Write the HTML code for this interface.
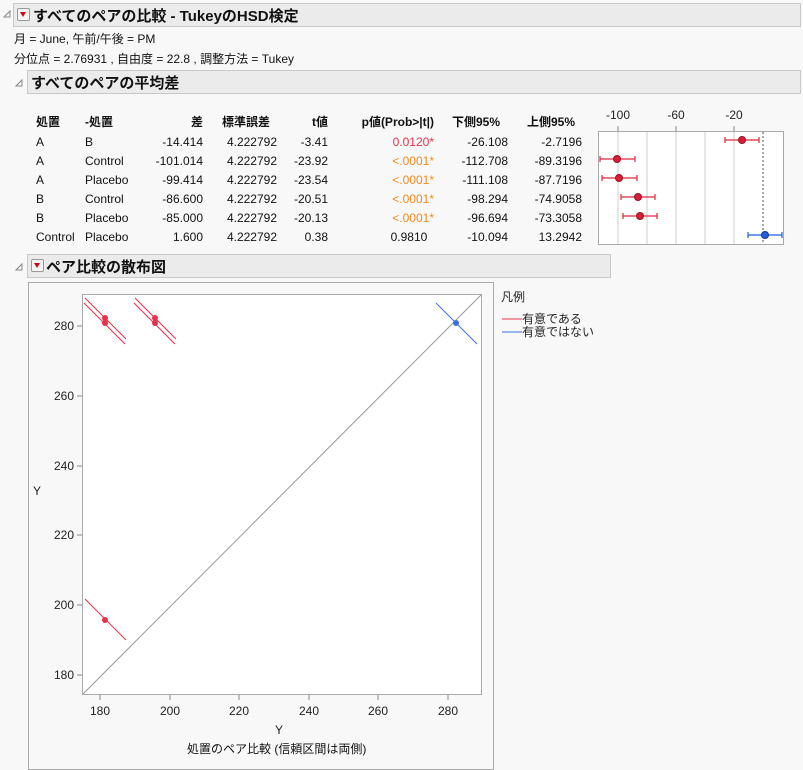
<!DOCTYPE html>
<html><head><meta charset="utf-8"><style>
body{margin:0;width:803px;height:770px;background:#f8f8f8;font-family:"Liberation Sans","Noto Sans CJK JP",sans-serif;font-size:12px;color:#111;position:relative;overflow:hidden}
.a{position:absolute;white-space:nowrap}
.hdr{position:absolute;background:#ebebeb;border:1px solid #c8c8c8;font-weight:bold;font-size:15px}
.dd{position:absolute;width:11px;height:11px;border:1px solid #999;background:#f4f4f4;border-radius:2px}
.dd:after{content:"";position:absolute;left:2px;top:3px;border-left:3.5px solid transparent;border-right:3.5px solid transparent;border-top:5px solid #d0021b}
.r{text-align:right}
.b{font-weight:bold}
</style></head><body>
<svg class="a" style="left:0;top:0" width="803" height="770">
<path d="M4 17 L10 11 L10 17 Z" fill="none" stroke="#888"/>
<path d="M16 86 L22 80 L22 86 Z" fill="none" stroke="#888"/>
<path d="M16 270 L22 264 L22 270 Z" fill="none" stroke="#888"/>
</svg>
<div class="hdr" style="left:13px;top:3px;width:786px;height:22px"></div>
<div class="dd" style="left:17px;top:8px"></div>
<div class="a b" style="left:33px;top:5px;font-size:15px">すべてのペアの比較 - TukeyのHSD検定</div>
<div class="a" style="left:14px;top:30px">月 = June, 午前/午後 = PM</div>
<div class="a" style="left:14px;top:50px">分位点 = 2.76931 , 自由度 = 22.8 , 調整方法 = Tukey</div>
<div class="hdr" style="left:27px;top:70px;width:772px;height:22px"></div>
<div class="a b" style="left:31px;top:72px;font-size:15px">すべてのペアの平均差</div>

<div class="a b" style="left:36px;top:113px">処置</div>
<div class="a b" style="left:85px;top:113px">-処置</div>
<div class="a b r" style="left:150px;width:53px;top:113px">差</div>
<div class="a b r" style="left:210px;width:60px;top:113px">標準誤差</div>
<div class="a b r" style="left:280px;width:48px;top:113px">t値</div>
<div class="a b r" style="left:330px;width:104px;top:113px">p値(Prob&gt;|t|)</div>
<div class="a b r" style="left:440px;width:60px;top:113px">下側95%</div>
<div class="a b r" style="left:510px;width:65px;top:113px">上側95%</div>

<div class="a" style="left:36px;top:133px;line-height:19px">A<br>A<br>A<br>B<br>B<br>Control</div>
<div class="a" style="left:85px;top:133px;line-height:19px">B<br>Control<br>Placebo<br>Control<br>Placebo<br>Placebo</div>
<div class="a r" style="left:140px;width:63px;top:133px;line-height:19px">-14.414<br>-101.014<br>-99.414<br>-86.600<br>-85.000<br>1.600</div>
<div class="a r" style="left:210px;width:67px;top:133px;line-height:19px">4.222792<br>4.222792<br>4.222792<br>4.222792<br>4.222792<br>4.222792</div>
<div class="a r" style="left:280px;width:48px;top:133px;line-height:19px">-3.41<br>-23.92<br>-23.54<br>-20.51<br>-20.13<br>0.38</div>
<div class="a r" style="left:360px;width:74px;top:133px;line-height:19px"><span style="color:#e8324a">0.0120*</span><br><span style="color:#f08a1e">&lt;.0001*</span><br><span style="color:#f08a1e">&lt;.0001*</span><br><span style="color:#f08a1e">&lt;.0001*</span><br><span style="color:#f08a1e">&lt;.0001*</span><br>0.9810&nbsp;&nbsp;</div>
<div class="a r" style="left:440px;width:68px;top:133px;line-height:19px">-26.108<br>-112.708<br>-111.108<br>-98.294<br>-96.694<br>-10.094</div>
<div class="a r" style="left:510px;width:72px;top:133px;line-height:19px">-2.7196<br>-89.3196<br>-87.7196<br>-74.9058<br>-73.3058<br>13.2942</div>

<svg class="a" style="left:590px;top:100px" width="213" height="150">
<rect x="8.5" y="31.5" width="185" height="113" fill="#fff" stroke="#aaa"/>
<g stroke="#ccc"><path d="M28 32V144M57 32V144M86 32V144M115 32V144M144 32V144"/></g>
<g stroke="#888"><path d="M28 26V31M86 26V31M144 26V31"/></g>
<path d="M173 32V144" stroke="#555" stroke-dasharray="2,2"/>
<g font-size="12" fill="#222" text-anchor="middle"><text x="28" y="19">-100</text><text x="86" y="19">-60</text><text x="144" y="19">-20</text></g>
<g stroke="#e0283c" stroke-width="1.2">
<path d="M135 40H169M135 37V43M169 37V43"/>
<path d="M10 59H45M10 56V62M45 56V62"/>
<path d="M12 78H47M12 75V81M47 75V81"/>
<path d="M31 97H65M31 94V100M65 94V100"/>
<path d="M33 116H67M33 113V119M67 113V119"/>
</g>
<g fill="#d61f35" stroke="#a01020"><circle cx="152" cy="40" r="3.5"/><circle cx="27" cy="59" r="3.5"/><circle cx="29" cy="78" r="3.5"/><circle cx="48" cy="97" r="3.5"/><circle cx="50" cy="116" r="3.5"/></g>
<path d="M158 135H192M158 132V138M192 132V138" stroke="#1f5fe0" stroke-width="1.2"/>
<circle cx="175" cy="135" r="3.5" fill="#1f5fe0" stroke="#103a90"/>
</svg>

<div class="hdr" style="left:27px;top:254px;width:582px;height:22px"></div>
<div class="dd" style="left:31px;top:259px"></div>
<div class="a b" style="left:46px;top:256px;font-size:15px">ペア比較の散布図</div>

<svg class="a" style="left:0;top:0" width="803" height="770">
<rect x="28.5" y="282.5" width="465" height="487" fill="#f8f8f8" stroke="#aaa"/>
<rect x="82.5" y="294.5" width="399" height="400" fill="#fff" stroke="#aaa"/>
<path d="M83 694L481 295" stroke="#999"/>
<g stroke="#888"><path d="M77 326H82M77 396H82M77 466H82M77 535H82M77 605H82M77 675H82"/>
<path d="M100 695V700M170 695V700M239 695V700M309 695V700M378 695V700M448 695V700"/></g>
<g font-size="12" fill="#222" text-anchor="end"><text x="74" y="330">280</text><text x="74" y="400">260</text><text x="74" y="470">240</text><text x="74" y="539">220</text><text x="74" y="609">200</text><text x="74" y="679">180</text></g>
<g font-size="12" fill="#222" text-anchor="middle"><text x="100" y="715">180</text><text x="170" y="715">200</text><text x="239" y="715">220</text><text x="309" y="715">240</text><text x="378" y="715">260</text><text x="448" y="715">280</text><text x="279" y="734">Y</text></g>
<text x="33" y="495" font-size="12" fill="#222">Y</text>
<g stroke="#e8324a" stroke-width="1"><path d="M85 298L126 339M84 303L125 344M135 298L176 339M134 303L175 344M85 599L126 640"/></g>
<g fill="#e8324a"><circle cx="105" cy="318" r="3"/><circle cx="105" cy="323" r="3"/><circle cx="155" cy="318" r="3"/><circle cx="155" cy="323" r="3"/><circle cx="105" cy="620" r="3"/></g>
<path d="M436 303L477 344" stroke="#3b6fe8"/>
<circle cx="456" cy="323" r="3" fill="#3b6fe8"/>
<text x="501" y="301" font-size="12" fill="#222">凡例</text>
<path d="M502 319H522" stroke="#e8324a"/><path d="M502 332H522" stroke="#3b6fe8"/>
<text x="522" y="323" font-size="12" fill="#222">有意である</text>
<text x="522" y="336" font-size="12" fill="#222">有意ではない</text>
</svg>
<div class="a" style="left:187px;top:740px">処置のペア比較 (信頼区間は両側)</div>
</body></html>
